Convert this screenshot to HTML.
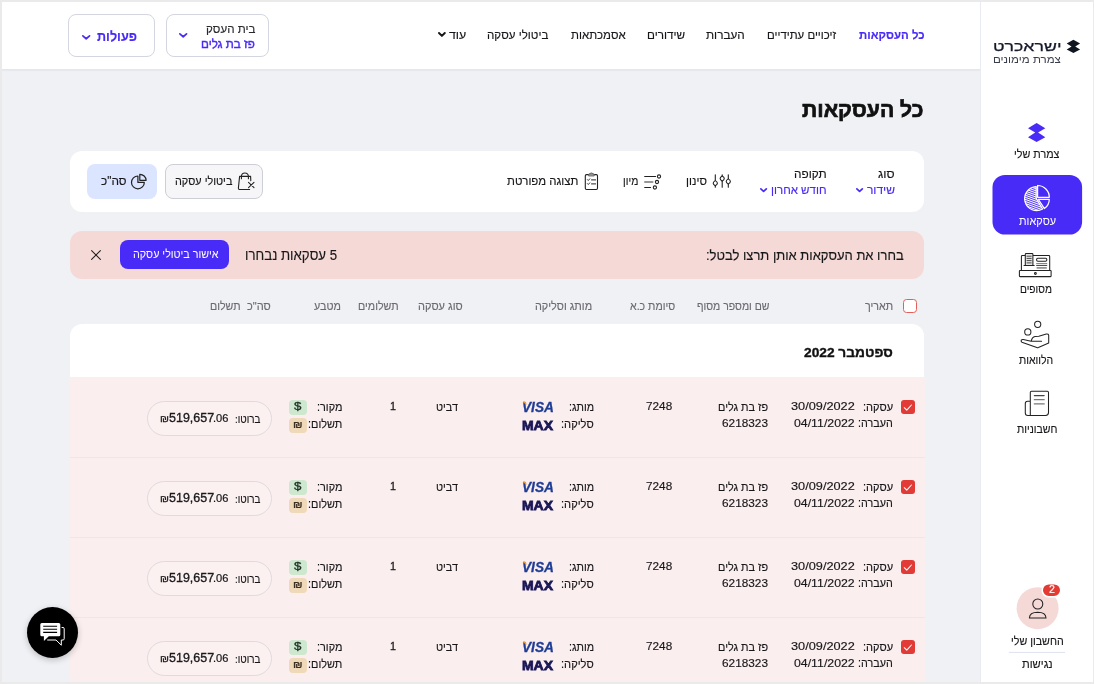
<!DOCTYPE html>
<html lang="he" dir="rtl">
<head>
<meta charset="utf-8">
<title>כל העסקאות</title>
<style>
*{box-sizing:border-box;margin:0;padding:0}
html,body{width:1094px;height:684px;overflow:hidden;background:#f0f1f5}
body{font-family:"Liberation Sans",sans-serif;color:#17171a;position:relative;font-size:12px;direction:ltr}
.abs{position:absolute}
.txt{position:absolute;left:0;top:0;width:1094px;height:684px;will-change:transform}
.t{position:absolute;white-space:nowrap;line-height:1;-webkit-text-stroke:0.15px currentColor;direction:rtl;transform-origin:0 50%}
.frame{position:absolute;left:0;top:0;width:1094px;height:684px;border:2px solid #eaeaea;border-right-width:1px;z-index:50}
.side{position:absolute;left:980px;top:2px;width:113px;height:682px;background:#fff;border-left:1px solid #e9ebf3}
.hdr{position:absolute;left:2px;top:2px;width:979px;height:68px;background:#fff;border-bottom:1px solid #e4e6ef;box-shadow:0 1px 1px rgba(40,50,90,.04)}
.btn{position:absolute;border:1px solid #d3d5e0;border-radius:8px;background:#fff}
.card{position:absolute;left:70px;width:854.3px;background:#fff;border-radius:12px}
.row{position:absolute;left:70px;width:854.5px;height:80px;background:#fbeeee;border-top:1px solid #f3e5e7}
.cb{position:absolute;left:901.4px;width:13.7px;height:13.8px;border-radius:3px;background:#e23a36}
.bdg{position:absolute;left:288.8px;width:18.2px;height:15px;border-radius:4px}
.pill{position:absolute;left:147.3px;width:124.8px;height:34.8px;border:1px solid #e2d9de;border-radius:18px;background:#fcf1f1}
</style>
</head>
<body>

<div class="hdr"></div>
<div class="btn" style="left:68px;top:14.4px;width:86.5px;height:42.4px"></div>
<div class="btn" style="left:166.2px;top:14.4px;width:102.5px;height:42.4px"></div>
<svg class="abs" style="left:80.7px;top:33.7px" width="10.4" height="6.6" viewBox="0 0 10.4 6.6"><path d="M1.85 1.85 L5.20 4.75 L8.55 1.85" fill="none" stroke="#482bf6" stroke-width="1.7" stroke-linecap="round" stroke-linejoin="round"/></svg>
<svg class="abs" style="left:177.6px;top:32.3px" width="10.4" height="6.6" viewBox="0 0 10.4 6.6"><path d="M1.85 1.85 L5.20 4.75 L8.55 1.85" fill="none" stroke="#482bf6" stroke-width="1.7" stroke-linecap="round" stroke-linejoin="round"/></svg>
<svg class="abs" style="left:437.0px;top:31.3px" width="9.8" height="6.9" viewBox="0 0 9.8 6.9"><path d="M2.00 2.00 L4.90 4.90 L7.80 2.00" fill="none" stroke="#17171a" stroke-width="2.0" stroke-linecap="round" stroke-linejoin="round"/></svg>
<div class="card" style="top:150.5px;height:61.6px"></div>
<svg class="abs" style="left:855.0px;top:187.1px" width="9.2" height="6.3" viewBox="0 0 9.2 6.3"><path d="M1.85 1.85 L4.60 4.45 L7.35 1.85" fill="none" stroke="#482bf6" stroke-width="1.7" stroke-linecap="round" stroke-linejoin="round"/></svg>
<svg class="abs" style="left:758.5px;top:187.1px" width="9.2" height="6.3" viewBox="0 0 9.2 6.3"><path d="M1.85 1.85 L4.60 4.45 L7.35 1.85" fill="none" stroke="#482bf6" stroke-width="1.7" stroke-linecap="round" stroke-linejoin="round"/></svg>
<div class="btn" style="left:165.1px;top:164.3px;width:97.6px;height:34.3px;background:#f6f6f8;border-color:#cdced6"></div>
<div class="abs" style="left:87px;top:164.3px;width:70px;height:34.3px;border-radius:8px;background:#dce5ff"></div>
<svg class="abs" style="left:0;top:0" width="1094" height="684" viewBox="0 0 1094 684" fill="none" stroke="#222" stroke-width="1.1" stroke-linecap="round" stroke-linejoin="round">
<!-- filter sliders -->
<g>
<path d="M715.3 174.7V187.2M722.2 174.7V187.2M728.3 174.7V187.2"/>
<path d="M715.3 180.6Q719.5 183.2 715.3 185.8Q711.1 183.2 715.3 180.6Z" fill="#fff"/>
<path d="M722.2 176Q726.4 178.6 722.2 181.2Q718 178.6 722.2 176Z" fill="#fff"/>
<path d="M728.3 178.9Q732.5 181.5 728.3 184.1Q724.1 181.5 728.3 178.9Z" fill="#fff"/>
</g>
<!-- sort -->
<g>
<path d="M644.7 176.5H655.6"/><circle cx="659" cy="176.5" r="1.6"/>
<path d="M644.7 182H652.8" stroke="#777" stroke-width="1.3"/><circle cx="657" cy="182" r="1.6"/>
<path d="M644.7 187.5H650.6"/><circle cx="654.9" cy="187.5" r="1.6"/>
</g>
<!-- clipboard -->
<g>
<rect x="585.3" y="174.6" width="12.2" height="14.9" rx="1.2"/>
<path d="M588.6 175.6V174.2Q591.4 171.6 594.2 174.2V175.6Z" fill="#8d8d92" stroke="#555" stroke-width="0.8"/>
<path d="M587.4 179.6L588.3 180.5L589.8 178.8M587.4 183.6L588.3 184.5L589.8 182.8" stroke-width="0.9"/>
<path d="M591.5 179.9H595.6M591.5 183.9H595.6" stroke-width="1"/>
</g>
<!-- bag with x -->
<g>
<path d="M250.8 180.6L250.6 176.4H239.6L238.4 187.9Q238.3 189.5 239.9 189.5H249.6"/>
<path d="M241.4 178.7V176.4Q241.6 173 244.9 173Q248.2 173 248.4 176.4V178.7"/>
<path d="M248.5 182.3L254 187.7M254 182.3L248.5 187.7"/>
</g>
<!-- pie -->
<g stroke-width="1.2">
<path d="M137.9 176V182.4H144.3A6.4 6.4 0 1 1 137.9 176Z"/>
<path d="M139.8 174.3V180.3H146.1A6.2 6.2 0 0 0 139.8 174.3Z"/>
</g>
</svg>

<div class="card" style="top:231px;height:47.8px;width:854px;background:#f5d9d7"></div>
<div class="abs" style="left:120px;top:240.4px;width:109.4px;height:28.9px;border-radius:8px;background:#482bf6"></div>
<svg class="abs" style="left:89.5px;top:249.3px" width="12" height="12" viewBox="0 0 12 12"><path d="M1.6 1.6 L10.4 10.4 M10.4 1.6 L1.6 10.4" stroke="#222" stroke-width="1.1" stroke-linecap="round"/></svg>
<div class="abs" style="left:902.6px;top:298.9px;width:14.4px;height:14.3px;border:1.5px solid #e2605a;border-radius:3.5px;background:#fff"></div>
<div class="card" style="top:324px;height:60px;border-radius:12px 12px 0 0"></div>
<div class="row" style="top:377px;border-top-color:transparent"></div>
<div class="cb" style="top:400px"><svg width="13.6" height="13.8" viewBox="0 0 13.6 13.8" style="display:block"><path d="M3.3 7.7 L5.8 10.1 L10.4 5.0" fill="none" stroke="#fff" stroke-width="1.05" stroke-linecap="round" stroke-linejoin="round"/></svg></div>
<div class="bdg" style="top:399.6px;background:#cde8cf"></div>
<div class="bdg" style="top:417.5px;background:#efd9b8"></div>
<div class="pill" style="top:400.9px"></div>
<svg class="abs" style="left:521px;top:401px;z-index:5" width="8" height="6" viewBox="0 0 8 6"><path d="M1.4 1.2 L4.3 1 Q5 1 5.2 1.8 L5.6 4 Q4.2 2.2 1.4 1.2Z" fill="#f2a52b"/></svg>
<div class="row" style="top:457px"></div>
<div class="cb" style="top:480px"><svg width="13.6" height="13.8" viewBox="0 0 13.6 13.8" style="display:block"><path d="M3.3 7.7 L5.8 10.1 L10.4 5.0" fill="none" stroke="#fff" stroke-width="1.05" stroke-linecap="round" stroke-linejoin="round"/></svg></div>
<div class="bdg" style="top:479.6px;background:#cde8cf"></div>
<div class="bdg" style="top:497.5px;background:#efd9b8"></div>
<div class="pill" style="top:480.9px"></div>
<svg class="abs" style="left:521px;top:481px;z-index:5" width="8" height="6" viewBox="0 0 8 6"><path d="M1.4 1.2 L4.3 1 Q5 1 5.2 1.8 L5.6 4 Q4.2 2.2 1.4 1.2Z" fill="#f2a52b"/></svg>
<div class="row" style="top:537px"></div>
<div class="cb" style="top:560px"><svg width="13.6" height="13.8" viewBox="0 0 13.6 13.8" style="display:block"><path d="M3.3 7.7 L5.8 10.1 L10.4 5.0" fill="none" stroke="#fff" stroke-width="1.05" stroke-linecap="round" stroke-linejoin="round"/></svg></div>
<div class="bdg" style="top:559.6px;background:#cde8cf"></div>
<div class="bdg" style="top:577.5px;background:#efd9b8"></div>
<div class="pill" style="top:560.9px"></div>
<svg class="abs" style="left:521px;top:561px;z-index:5" width="8" height="6" viewBox="0 0 8 6"><path d="M1.4 1.2 L4.3 1 Q5 1 5.2 1.8 L5.6 4 Q4.2 2.2 1.4 1.2Z" fill="#f2a52b"/></svg>
<div class="row" style="top:617px"></div>
<div class="cb" style="top:640px"><svg width="13.6" height="13.8" viewBox="0 0 13.6 13.8" style="display:block"><path d="M3.3 7.7 L5.8 10.1 L10.4 5.0" fill="none" stroke="#fff" stroke-width="1.05" stroke-linecap="round" stroke-linejoin="round"/></svg></div>
<div class="bdg" style="top:639.6px;background:#cde8cf"></div>
<div class="bdg" style="top:657.5px;background:#efd9b8"></div>
<div class="pill" style="top:640.9px"></div>
<svg class="abs" style="left:521px;top:641px;z-index:5" width="8" height="6" viewBox="0 0 8 6"><path d="M1.4 1.2 L4.3 1 Q5 1 5.2 1.8 L5.6 4 Q4.2 2.2 1.4 1.2Z" fill="#f2a52b"/></svg>
<div class="side"></div>
<svg class="abs" style="left:0;top:0" width="1094" height="684" viewBox="0 0 1094 684" fill="none" stroke="#222" stroke-width="1.1" stroke-linecap="round" stroke-linejoin="round">
<defs>
<pattern id="hatch" width="1.95" height="1.95" patternUnits="userSpaceOnUse" patternTransform="rotate(20)"><rect x="0" y="0" width="1.95" height="1.05" fill="#fff" stroke="none"/></pattern>
</defs>
<!-- logo mark -->
<path d="M1073.4 39.8L1080.1 43.4L1075.2 46.4L1080.1 49.4L1073.4 53.1L1066.7 49.4L1071.6 46.4L1066.7 43.4Z" fill="#10151f" stroke="none"/>
<!-- blue mark -->
<path d="M1036.6 123L1045.3 128.2L1038.1 132.6L1045.3 137.2L1036.6 142L1028 137.2L1035.2 132.6L1028 128.2Z" fill="#482bf6" stroke="none"/>
<!-- active tile -->
<rect x="992.5" y="174.9" width="89.6" height="59.7" rx="12.5" fill="#482bf6" stroke="none"/>
<!-- pie white -->
<g stroke="#fff" stroke-width="1.25">
<path d="M1036.2 186.6A12 12 0 1 0 1042.6 209L1036.2 198.4Z" fill="url(#hatch)"/>
<path d="M1037.6 185.5V197.3H1049.3A11.8 11.8 0 0 0 1037.6 185.5Z"/>
<path d="M1038.3 199.4H1049.3A11.8 11.8 0 0 1 1044.4 208.6Z"/>
</g>
<!-- register -->
<g stroke-width="1.05">
<rect x="1019.4" y="270.4" width="31.7" height="6.2" rx="0.6"/>
<circle cx="1035.4" cy="273.5" r="0.9"/>
<path d="M1021.4 270.4V256.4Q1021.4 255.5 1022.3 255.5H1025M1033.2 255.5H1048.8Q1049.7 255.5 1049.7 256.4V270.4"/>
<path d="M1025.3 265.2V254.2Q1025.3 253.4 1026.1 253.4H1032.1Q1032.9 253.4 1032.9 254.2V265.2" fill="#e4e4e6"/>
<path d="M1024 265.4H1034.2"/>
<path d="M1027 256.2H1031.2M1027 258.4H1031.2M1027 260.6H1031.2M1027 262.9H1031.2" stroke-width="0.8"/>
<rect x="1036.6" y="258.3" width="10.2" height="3" rx="1.2"/>
<path d="M1036.6 263.5H1046.8" stroke="#666" stroke-width="0.8"/>
<path d="M1036.6 265.4H1046.8" stroke-width="0.9"/>
<path d="M1036.6 267.9H1046.8" stroke="#8a8a8e" stroke-width="1.6" stroke-linecap="butt"/>
</g>
<!-- hand with coins -->
<g stroke-width="1.05">
<circle cx="1037.7" cy="324.3" r="3.1"/>
<circle cx="1027.8" cy="331.9" r="3.1"/>
<path d="M1031.1 341.3Q1032.2 337.2 1035 336.6L1038.8 336.2L1046.3 334.1Q1048.7 333.8 1048.7 335.4V342.9L1038.4 347.6Q1037.6 347.9 1036.8 347.6L1021.9 342.2Q1020.6 341.4 1021.3 340.1Q1022 339.2 1023.3 339.5L1031.1 341.3H1041.6"/>
</g>
<!-- invoice -->
<g stroke-width="1.05">
<path d="M1030.3 415.5V392.4Q1030.3 391.2 1031.5 391.2H1047.3Q1048.5 391.2 1048.5 392.4V412.6Q1048.5 415.5 1045.6 415.5H1027.8Q1025.3 415.5 1025.3 413V403.6Q1025.3 401.3 1027.6 401.3H1030.3"/>
<path d="M1034.3 395.6H1044.2" stroke="#444"/>
<path d="M1034.3 399.7H1044.2M1034.3 403.9H1044.2" stroke="#77777c" stroke-width="1.2"/>
</g>
<!-- avatar -->
<circle cx="1037.6" cy="608.2" r="21" fill="#f5d9d7" stroke="none"/>
<g stroke-width="1.05">
<circle cx="1037.8" cy="604" r="5"/>
<path d="M1029.4 617.9Q1029.6 612.3 1037.7 612.2Q1045.8 612.3 1046 617.9Z"/>
</g>
<rect x="1042.2" y="583.6" width="18.6" height="13.2" rx="6.6" fill="#e33a34" stroke="#fff" stroke-width="1.6"/>
<path d="M1009.3 652.4H1064.6" stroke="#dde2ee" stroke-width="1"/>
</svg>

<div class="abs" style="left:26.8px;top:606.8px;width:51.2px;height:51.2px;border-radius:50%;background:#000;box-shadow:0 2px 6px rgba(0,0,0,.22)"></div>
<svg class="abs" style="left:0;top:0" width="1094" height="684" viewBox="0 0 1094 684" fill="none" stroke="#fff" stroke-width="1" stroke-linejoin="round" stroke-linecap="round">
<path d="M41.8 622.9H58.8Q60.3 622.9 60.3 624.4V634.8Q60.3 636.3 58.8 636.3H48.8L43.9 641V636.3H41.8Q40.3 636.3 40.3 634.8V624.4Q40.3 622.9 41.8 622.9Z" fill="#fff" stroke="none"/>
<path d="M43.2 626.2H57.1M43.2 629.3H57.1M43.2 632.4H57.1" stroke="#000" stroke-width="1.1" stroke-linecap="butt"/>
<path d="M62 627.5H63Q64.2 627.5 64.2 628.7V638.8Q64.2 640 63 640H61.3V645.2L56 640H47.6"/>
</svg>

<div class="txt">
<div class="t" style="left:97.3px;top:28.7px;font-size:14px;font-weight:bold;color:#482bf6;transform:scaleX(0.903);">פעולות</div>
<div class="t" style="left:205.7px;top:23.1px;font-size:12.5px;color:#2a2a2e;transform:scaleX(0.926);">בית העסק</div>
<div class="t" style="left:201.3px;top:37.6px;font-size:12.5px;color:#482bf6;-webkit-text-stroke:0.45px #482bf6;transform:scaleX(0.930);">פז בת גלים</div>
<div class="t" style="left:858.7px;top:28.6px;font-size:12px;font-weight:bold;color:#482bf6;transform:scaleX(0.953);">כל העסקאות</div>
<div class="t" style="left:766.9px;top:28.6px;font-size:12px;transform:scaleX(0.950);">זיכויים עתידיים</div>
<div class="t" style="left:706.4px;top:28.6px;font-size:12px;transform:scaleX(0.977);">העברות</div>
<div class="t" style="left:647.3px;top:28.6px;font-size:12px;transform:scaleX(0.975);">שידורים</div>
<div class="t" style="left:571.3px;top:28.6px;font-size:12px;transform:scaleX(0.958);">אסמכתאות</div>
<div class="t" style="left:487.4px;top:28.6px;font-size:12px;transform:scaleX(0.964);">ביטולי עסקה</div>
<div class="t" style="left:448.8px;top:28.6px;font-size:12px;transform:scaleX(1.032);">עוד</div>
<div class="t" style="left:802.4px;top:100.1px;font-size:20.8px;font-weight:bold;color:#111;-webkit-text-stroke:0.7px #111;transform:scaleX(1.020);">כל העסקאות</div>
<div class="t" style="left:878.4px;top:168.1px;font-size:12px;transform:scaleX(1.033);">סוג</div>
<div class="t" style="left:866.9px;top:183.6px;font-size:12px;color:#482bf6;">שידור</div>
<div class="t" style="left:793.8px;top:168.1px;font-size:12px;transform:scaleX(0.983);">תקופה</div>
<div class="t" style="left:770.9px;top:183.6px;font-size:12px;color:#482bf6;transform:scaleX(0.959);">חודש אחרון</div>
<div class="t" style="left:686.4px;top:175.1px;font-size:12px;transform:scaleX(0.955);">סינון</div>
<div class="t" style="left:623.2px;top:175.1px;font-size:12px;transform:scaleX(0.869);">מיון</div>
<div class="t" style="left:506.6px;top:175.1px;font-size:12px;transform:scaleX(0.950);">תצוגה מפורטת</div>
<div class="t" style="left:175.1px;top:175.9px;font-size:11.5px;transform:scaleX(0.942);">ביטולי עסקה</div>
<div class="t" style="left:101.1px;top:175.4px;font-size:12px;transform:scaleX(0.984);">סה"כ</div>
<div class="t" style="left:706.1px;top:248.3px;font-size:14px;transform:scaleX(0.927);">בחרו את העסקאות אותן תרצו לבטל:</div>
<div class="t" style="left:245.0px;top:248.2px;font-size:14.5px;transform:scaleX(0.913);">5 עסקאות נבחרו</div>
<div class="t" style="left:132.5px;top:249.3px;font-size:11px;color:#fff;-webkit-text-stroke:0;transform:scaleX(0.974);">אישור ביטולי עסקה</div>
<div class="t" style="left:865.1px;top:300.5px;font-size:11.5px;color:#6a6a70;transform:scaleX(0.930);">תאריך</div>
<div class="t" style="left:697.3px;top:300.5px;font-size:11.5px;color:#6a6a70;transform:scaleX(0.910);">שם ומספר מסוף</div>
<div class="t" style="left:629.6px;top:300.5px;font-size:11.5px;color:#6a6a70;transform:scaleX(0.922);">סיומת כ.א</div>
<div class="t" style="left:535.0px;top:300.5px;font-size:11.5px;color:#6a6a70;transform:scaleX(0.943);">מותג וסליקה</div>
<div class="t" style="left:417.8px;top:300.5px;font-size:11.5px;color:#6a6a70;transform:scaleX(0.953);">סוג עסקה</div>
<div class="t" style="left:358.1px;top:300.5px;font-size:11.5px;color:#6a6a70;transform:scaleX(0.928);">תשלומים</div>
<div class="t" style="left:314.3px;top:300.5px;font-size:11.5px;color:#6a6a70;transform:scaleX(0.936);">מטבע</div>
<div class="t" style="left:246.5px;top:300.5px;font-size:11.5px;color:#6a6a70;transform:scaleX(0.958);">סה"כ</div>
<div class="t" style="left:210.0px;top:300.5px;font-size:11.5px;color:#6a6a70;transform:scaleX(0.924);">תשלום</div>
<div class="t" style="left:804.0px;top:346.1px;font-size:13.5px;font-weight:bold;color:#111;-webkit-text-stroke:0.35px #111;transform:scaleX(1.017);">ספטמבר 2022</div>
<div class="t" style="left:862.8px;top:400.5px;font-size:12px;transform:scaleX(0.919);">עסקה:</div>
<div class="t" style="left:790.9px;top:401.2px;font-size:11.2px;direction:ltr;transform:scaleX(1.139);">30/09/2022</div>
<div class="t" style="left:858.3px;top:416.8px;font-size:12px;transform:scaleX(0.895);">העברה:</div>
<div class="t" style="left:794.0px;top:417.5px;font-size:11.2px;direction:ltr;transform:scaleX(1.100);">04/11/2022</div>
<div class="t" style="left:717.9px;top:400.5px;font-size:12px;transform:scaleX(0.904);">פז בת גלים</div>
<div class="t" style="left:722.1px;top:417.5px;font-size:11.2px;direction:ltr;transform:scaleX(1.056);">6218323</div>
<div class="t" style="left:645.6px;top:401.2px;font-size:11.2px;direction:ltr;transform:scaleX(1.053);">7248</div>
<div class="t" style="left:568.8px;top:400.5px;font-size:12px;transform:scaleX(0.894);">מותג:</div>
<div class="t" style="left:561.1px;top:418.3px;font-size:12px;transform:scaleX(0.927);">סליקה:</div>
<div class="t" style="left:522.0px;top:400.1px;font-size:14.0px;font-weight:bold;color:#1f3d95;direction:ltr;font-style:italic;-webkit-text-stroke:0.3px #1f3d95;transform:scaleX(0.976);">VISA</div>
<div class="t" style="left:522.1px;top:419.7px;font-size:12.6px;font-weight:bold;color:#1a1757;direction:ltr;-webkit-text-stroke:0.8px #1a1757;transform:scaleX(1.107);">MAX</div>
<div class="t" style="left:436.3px;top:400.5px;font-size:12px;transform:scaleX(0.901);">דביט</div>
<div class="t" style="left:389.9px;top:401.2px;font-size:11.2px;direction:ltr;-webkit-text-stroke:0.3px #17171a;transform:scaleX(0.962);">1</div>
<div class="t" style="left:317.1px;top:400.5px;font-size:12px;transform:scaleX(0.908);">מקור:</div>
<div class="t" style="left:308.4px;top:418.3px;font-size:12px;transform:scaleX(0.906);">תשלום:</div>
<div class="t" style="left:294.3px;top:401.0px;font-size:11.5px;color:#1d2a1e;direction:ltr;-webkit-text-stroke:0.3px #1d2a1e;transform:scaleX(1.155);">$</div>
<div class="t" style="left:293.3px;top:421.0px;font-size:9px;font-weight:bold;color:#3a3020;direction:ltr;transform:scaleX(1.205);">₪</div>
<div class="t" style="left:234.8px;top:413.5px;font-size:11px;transform:scaleX(0.894);">ברוטו:</div>
<div class="t" style="left:160.1px;top:414.2px;font-size:9.5px;direction:ltr;-webkit-text-stroke:0.25px #1c1c1e;transform:scaleX(1.114);">₪</div>
<div class="t" style="left:168.9px;top:411.3px;font-size:13.4px;direction:ltr;-webkit-text-stroke:0.35px #1c1c1e;transform:scaleX(0.934);">519,657</div>
<div class="t" style="left:213.4px;top:414.1px;font-size:10px;direction:ltr;-webkit-text-stroke:0.2px #1c1c1e;transform:scaleX(1.107);">.06</div>
<div class="t" style="left:862.8px;top:480.5px;font-size:12px;transform:scaleX(0.919);">עסקה:</div>
<div class="t" style="left:790.9px;top:481.2px;font-size:11.2px;direction:ltr;transform:scaleX(1.139);">30/09/2022</div>
<div class="t" style="left:858.3px;top:496.8px;font-size:12px;transform:scaleX(0.895);">העברה:</div>
<div class="t" style="left:794.0px;top:497.5px;font-size:11.2px;direction:ltr;transform:scaleX(1.100);">04/11/2022</div>
<div class="t" style="left:717.9px;top:480.5px;font-size:12px;transform:scaleX(0.904);">פז בת גלים</div>
<div class="t" style="left:722.1px;top:497.5px;font-size:11.2px;direction:ltr;transform:scaleX(1.056);">6218323</div>
<div class="t" style="left:645.6px;top:481.2px;font-size:11.2px;direction:ltr;transform:scaleX(1.053);">7248</div>
<div class="t" style="left:568.8px;top:480.5px;font-size:12px;transform:scaleX(0.894);">מותג:</div>
<div class="t" style="left:561.1px;top:498.3px;font-size:12px;transform:scaleX(0.927);">סליקה:</div>
<div class="t" style="left:522.0px;top:480.1px;font-size:14.0px;font-weight:bold;color:#1f3d95;direction:ltr;font-style:italic;-webkit-text-stroke:0.3px #1f3d95;transform:scaleX(0.976);">VISA</div>
<div class="t" style="left:522.1px;top:499.7px;font-size:12.6px;font-weight:bold;color:#1a1757;direction:ltr;-webkit-text-stroke:0.8px #1a1757;transform:scaleX(1.107);">MAX</div>
<div class="t" style="left:436.3px;top:480.5px;font-size:12px;transform:scaleX(0.901);">דביט</div>
<div class="t" style="left:389.9px;top:481.2px;font-size:11.2px;direction:ltr;-webkit-text-stroke:0.3px #17171a;transform:scaleX(0.962);">1</div>
<div class="t" style="left:317.1px;top:480.5px;font-size:12px;transform:scaleX(0.908);">מקור:</div>
<div class="t" style="left:308.4px;top:498.3px;font-size:12px;transform:scaleX(0.906);">תשלום:</div>
<div class="t" style="left:294.3px;top:481.0px;font-size:11.5px;color:#1d2a1e;direction:ltr;-webkit-text-stroke:0.3px #1d2a1e;transform:scaleX(1.155);">$</div>
<div class="t" style="left:293.3px;top:501.0px;font-size:9px;font-weight:bold;color:#3a3020;direction:ltr;transform:scaleX(1.205);">₪</div>
<div class="t" style="left:234.8px;top:493.5px;font-size:11px;transform:scaleX(0.894);">ברוטו:</div>
<div class="t" style="left:160.1px;top:494.2px;font-size:9.5px;direction:ltr;-webkit-text-stroke:0.25px #1c1c1e;transform:scaleX(1.114);">₪</div>
<div class="t" style="left:168.9px;top:491.3px;font-size:13.4px;direction:ltr;-webkit-text-stroke:0.35px #1c1c1e;transform:scaleX(0.934);">519,657</div>
<div class="t" style="left:213.4px;top:494.1px;font-size:10px;direction:ltr;-webkit-text-stroke:0.2px #1c1c1e;transform:scaleX(1.107);">.06</div>
<div class="t" style="left:862.8px;top:560.5px;font-size:12px;transform:scaleX(0.919);">עסקה:</div>
<div class="t" style="left:790.9px;top:561.2px;font-size:11.2px;direction:ltr;transform:scaleX(1.139);">30/09/2022</div>
<div class="t" style="left:858.3px;top:576.8px;font-size:12px;transform:scaleX(0.895);">העברה:</div>
<div class="t" style="left:794.0px;top:577.5px;font-size:11.2px;direction:ltr;transform:scaleX(1.100);">04/11/2022</div>
<div class="t" style="left:717.9px;top:560.5px;font-size:12px;transform:scaleX(0.904);">פז בת גלים</div>
<div class="t" style="left:722.1px;top:577.5px;font-size:11.2px;direction:ltr;transform:scaleX(1.056);">6218323</div>
<div class="t" style="left:645.6px;top:561.2px;font-size:11.2px;direction:ltr;transform:scaleX(1.053);">7248</div>
<div class="t" style="left:568.8px;top:560.5px;font-size:12px;transform:scaleX(0.894);">מותג:</div>
<div class="t" style="left:561.1px;top:578.3px;font-size:12px;transform:scaleX(0.927);">סליקה:</div>
<div class="t" style="left:522.0px;top:560.1px;font-size:14.0px;font-weight:bold;color:#1f3d95;direction:ltr;font-style:italic;-webkit-text-stroke:0.3px #1f3d95;transform:scaleX(0.976);">VISA</div>
<div class="t" style="left:522.1px;top:579.7px;font-size:12.6px;font-weight:bold;color:#1a1757;direction:ltr;-webkit-text-stroke:0.8px #1a1757;transform:scaleX(1.107);">MAX</div>
<div class="t" style="left:436.3px;top:560.5px;font-size:12px;transform:scaleX(0.901);">דביט</div>
<div class="t" style="left:389.9px;top:561.2px;font-size:11.2px;direction:ltr;-webkit-text-stroke:0.3px #17171a;transform:scaleX(0.962);">1</div>
<div class="t" style="left:317.1px;top:560.5px;font-size:12px;transform:scaleX(0.908);">מקור:</div>
<div class="t" style="left:308.4px;top:578.3px;font-size:12px;transform:scaleX(0.906);">תשלום:</div>
<div class="t" style="left:294.3px;top:561.0px;font-size:11.5px;color:#1d2a1e;direction:ltr;-webkit-text-stroke:0.3px #1d2a1e;transform:scaleX(1.155);">$</div>
<div class="t" style="left:293.3px;top:581.0px;font-size:9px;font-weight:bold;color:#3a3020;direction:ltr;transform:scaleX(1.205);">₪</div>
<div class="t" style="left:234.8px;top:573.5px;font-size:11px;transform:scaleX(0.894);">ברוטו:</div>
<div class="t" style="left:160.1px;top:574.2px;font-size:9.5px;direction:ltr;-webkit-text-stroke:0.25px #1c1c1e;transform:scaleX(1.114);">₪</div>
<div class="t" style="left:168.9px;top:571.3px;font-size:13.4px;direction:ltr;-webkit-text-stroke:0.35px #1c1c1e;transform:scaleX(0.934);">519,657</div>
<div class="t" style="left:213.4px;top:574.1px;font-size:10px;direction:ltr;-webkit-text-stroke:0.2px #1c1c1e;transform:scaleX(1.107);">.06</div>
<div class="t" style="left:862.8px;top:640.5px;font-size:12px;transform:scaleX(0.919);">עסקה:</div>
<div class="t" style="left:790.9px;top:641.2px;font-size:11.2px;direction:ltr;transform:scaleX(1.139);">30/09/2022</div>
<div class="t" style="left:858.3px;top:656.8px;font-size:12px;transform:scaleX(0.895);">העברה:</div>
<div class="t" style="left:794.0px;top:657.5px;font-size:11.2px;direction:ltr;transform:scaleX(1.100);">04/11/2022</div>
<div class="t" style="left:717.9px;top:640.5px;font-size:12px;transform:scaleX(0.904);">פז בת גלים</div>
<div class="t" style="left:722.1px;top:657.5px;font-size:11.2px;direction:ltr;transform:scaleX(1.056);">6218323</div>
<div class="t" style="left:645.6px;top:641.2px;font-size:11.2px;direction:ltr;transform:scaleX(1.053);">7248</div>
<div class="t" style="left:568.8px;top:640.5px;font-size:12px;transform:scaleX(0.894);">מותג:</div>
<div class="t" style="left:561.1px;top:658.3px;font-size:12px;transform:scaleX(0.927);">סליקה:</div>
<div class="t" style="left:522.0px;top:640.1px;font-size:14.0px;font-weight:bold;color:#1f3d95;direction:ltr;font-style:italic;-webkit-text-stroke:0.3px #1f3d95;transform:scaleX(0.976);">VISA</div>
<div class="t" style="left:522.1px;top:659.7px;font-size:12.6px;font-weight:bold;color:#1a1757;direction:ltr;-webkit-text-stroke:0.8px #1a1757;transform:scaleX(1.107);">MAX</div>
<div class="t" style="left:436.3px;top:640.5px;font-size:12px;transform:scaleX(0.901);">דביט</div>
<div class="t" style="left:389.9px;top:641.2px;font-size:11.2px;direction:ltr;-webkit-text-stroke:0.3px #17171a;transform:scaleX(0.962);">1</div>
<div class="t" style="left:317.1px;top:640.5px;font-size:12px;transform:scaleX(0.908);">מקור:</div>
<div class="t" style="left:308.4px;top:658.3px;font-size:12px;transform:scaleX(0.906);">תשלום:</div>
<div class="t" style="left:294.3px;top:641.0px;font-size:11.5px;color:#1d2a1e;direction:ltr;-webkit-text-stroke:0.3px #1d2a1e;transform:scaleX(1.155);">$</div>
<div class="t" style="left:293.3px;top:661.0px;font-size:9px;font-weight:bold;color:#3a3020;direction:ltr;transform:scaleX(1.205);">₪</div>
<div class="t" style="left:234.8px;top:653.5px;font-size:11px;transform:scaleX(0.894);">ברוטו:</div>
<div class="t" style="left:160.1px;top:654.2px;font-size:9.5px;direction:ltr;-webkit-text-stroke:0.25px #1c1c1e;transform:scaleX(1.114);">₪</div>
<div class="t" style="left:168.9px;top:651.3px;font-size:13.4px;direction:ltr;-webkit-text-stroke:0.35px #1c1c1e;transform:scaleX(0.934);">519,657</div>
<div class="t" style="left:213.4px;top:654.1px;font-size:10px;direction:ltr;-webkit-text-stroke:0.2px #1c1c1e;transform:scaleX(1.107);">.06</div>
<div class="t" style="left:992.9px;top:39.7px;font-size:13.7px;color:#16192b;-webkit-text-stroke:0.25px #16192b;transform:scaleX(1.295);">ישראכרט</div>
<div class="t" style="left:992.8px;top:54.3px;font-size:10.8px;color:#3a3d4a;-webkit-text-stroke:0;transform:scaleX(1.068);">צמרת מימונים</div>
<div class="t" style="left:1013.5px;top:147.7px;font-size:12px;transform:scaleX(0.897);">צמרת שלי</div>
<div class="t" style="left:1018.5px;top:215.1px;font-size:12px;color:#fff;-webkit-text-stroke:0;transform:scaleX(0.910);">עסקאות</div>
<div class="t" style="left:1019.5px;top:283.2px;font-size:12px;transform:scaleX(0.849);">מסופים</div>
<div class="t" style="left:1018.6px;top:353.7px;font-size:12px;transform:scaleX(0.871);">הלוואות</div>
<div class="t" style="left:1016.6px;top:422.8px;font-size:12px;transform:scaleX(0.877);">חשבוניות</div>
<div class="t" style="left:1011.2px;top:634.6px;font-size:12px;transform:scaleX(0.889);">החשבון שלי</div>
<div class="t" style="left:1022.1px;top:657.6px;font-size:12px;transform:scaleX(0.929);">נגישות</div>
<div class="t" style="left:1048.7px;top:584.8px;font-size:10px;color:#fff;direction:ltr;transform:scaleX(1.061);">2</div>
</div>
<div class="frame"></div>
</body>
</html>
